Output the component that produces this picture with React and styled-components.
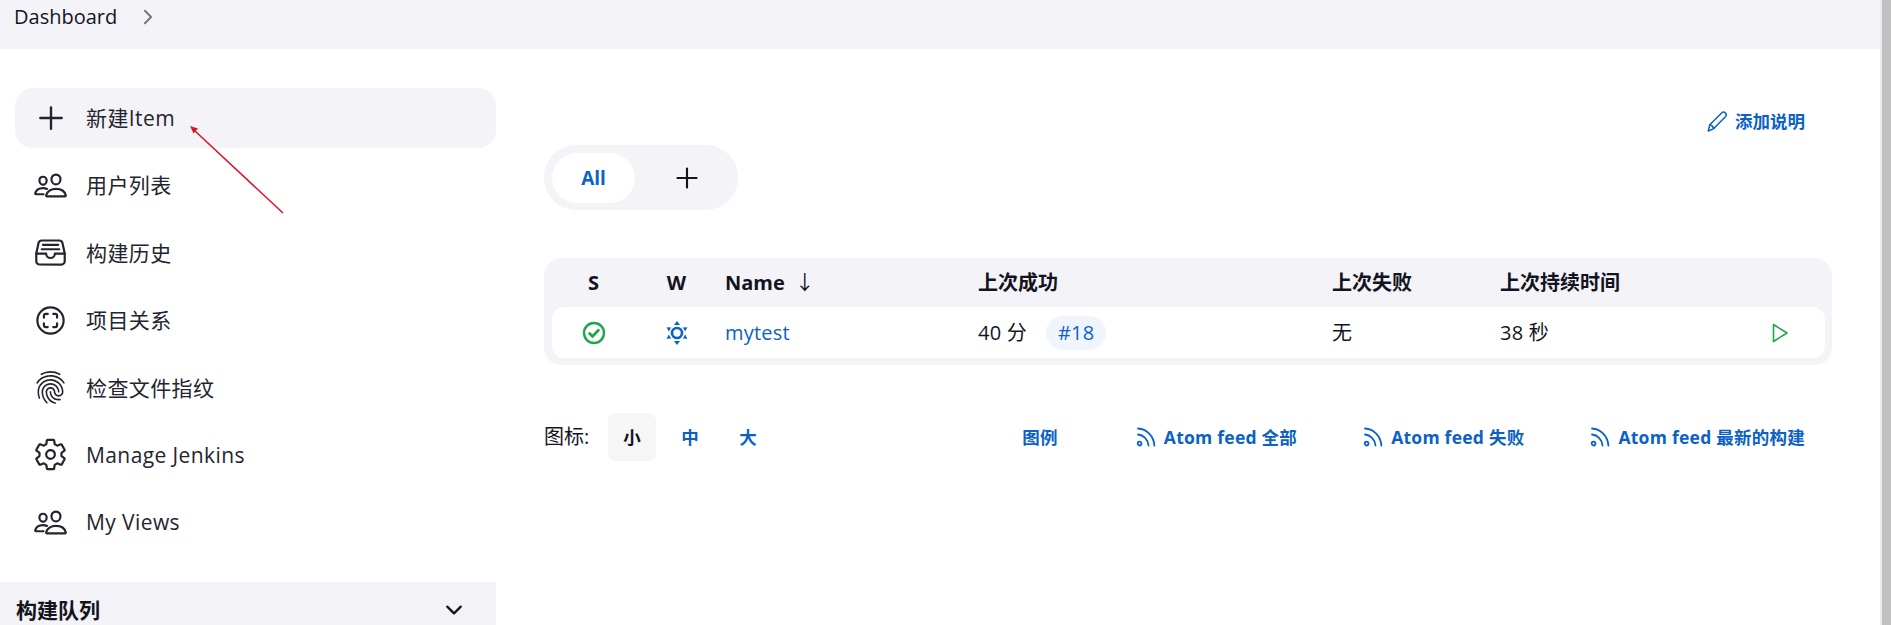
import styled, { createGlobalStyle } from 'styled-components'
import {
  IoAddOutline,
  IoPeopleOutline,
  IoFileTrayFullOutline,
  IoScanCircleOutline,
  IoFingerPrintOutline,
  IoSettingsOutline,
  IoChevronDownOutline,
  IoChevronForwardOutline,
} from 'react-icons/io5'

const GlobalStyle = createGlobalStyle`
  html, body {
    margin: 0;
    height: 100%;
    overflow: hidden;
    background: #fff;
  }
  body {
    font-family: "Open Sans", "Noto Sans CJK SC", sans-serif;
    color: #14141f;
  }
`

const Page = styled.div`
  display: flex;
  width: 1891px;
  height: 625px;
  overflow: hidden;
  position: relative;
`

const Content = styled.div`
  flex: 1;
  min-width: 0;
`

const Scrollbar = styled.div`
  width: 9px;
  background: #c1c1c1;
  border-left: 2px solid #ececec;
`

const Breadcrumb = styled.div`
  height: 49px;
  background: #f3f3f8;
  display: flex;
  align-items: flex-start;
  padding: 4px 0 0 14px;
  box-sizing: border-box;
  gap: 20px;
  font-size: 20px;
  line-height: 26px;
  svg {
    margin-top: 2px;
    color: #77777f;
  }
`

const Body = styled.div`
  display: flex;
`

const Sidebar = styled.aside`
  width: 496px;
  flex-shrink: 0;
  padding-top: 39px;
`

const NavList = styled.nav`
  display: flex;
  flex-direction: column;
  gap: 7.4px;
  margin: 0 0 30px 15px;
`

const NavItem = styled.a`
  height: 60px;
  display: flex;
  align-items: center;
  gap: 19px;
  padding-left: 19px;
  border-radius: 18px;
  font-size: 21px;
  line-height: 28px;
  letter-spacing: 0.4px;
  color: #24242e;
  background: ${(p) => (p.$active ? '#f3f3f8' : 'transparent')};
`

const NavIcon = styled.span`
  width: 33px;
  height: 33px;
  flex-shrink: 0;
  display: flex;
  align-items: center;
  justify-content: center;
  svg {
    flex-shrink: 0;
  }
`

const QueuePanel = styled.div`
  height: 60px;
  background: #f2f2f7;
  display: flex;
  align-items: flex-start;
  justify-content: space-between;
  padding: 11px 30px 0 16px;
  box-sizing: border-box;
  font-size: 21px;
  font-weight: 700;
  line-height: 34px;
  svg {
    width: 24px;
    height: 24px;
    margin-top: 5px;
  }
`

const Main = styled.main`
  flex: 1;
  min-width: 0;
  padding: 0 48px 0 48px;
`

const DescriptionRow = styled.div`
  display: flex;
  justify-content: flex-end;
  padding: 58px 27px 0 0;
  height: 96px;
  box-sizing: border-box;
`

const DescriptionLink = styled.a`
  display: flex;
  align-items: center;
  gap: 7px;
  height: 28px;
  font-size: 17.5px;
  line-height: 24px;
  font-weight: 700;
  color: #0b62c4;
`

const TabsRow = styled.div`
  height: 65px;
  margin-bottom: 48px;
`

const Tabs = styled.div`
  display: inline-flex;
  align-items: center;
  width: 194px;
  height: 65px;
  padding-left: 8px;
  box-sizing: border-box;
  border-radius: 32px;
  background: #f3f3f8;
`

const ActiveTab = styled.div`
  width: 83px;
  height: 50px;
  border-radius: 25px;
  display: flex;
  align-items: center;
  justify-content: center;
  font-size: 19px;
  font-weight: 700;
  color: #0b62c4;
  background: #fff;
`

const AddTab = styled.div`
  flex: 1;
  display: flex;
  align-items: center;
  justify-content: center;
  color: #14141f;
`

const Table = styled.div`
  background: #f3f3f8;
  border-radius: 18px;
  padding: 0 7px 7px 8px;
  height: 107px;
  box-sizing: border-box;
`

const columns = '83px 83px 7px 253px 354px 168px 230px 1fr'

const TableHead = styled.div`
  height: 49px;
  display: grid;
  grid-template-columns: ${columns};
  align-items: center;
  font-size: 20px;
  line-height: 28px;
  font-weight: 700;
`

const TableRow = styled.div`
  height: 51px;
  display: grid;
  grid-template-columns: ${columns};
  align-items: center;
  background: #fff;
  border-radius: 12px;
  font-size: 20px;
  line-height: 28px;
  letter-spacing: 0.2px;
`

const Centered = styled.div`
  display: flex;
  align-items: center;
  justify-content: center;
`

const Cell = styled.div`
  display: flex;
  align-items: center;
  gap: 19px;
  white-space: nowrap;
`

const SortArrow = styled.span`
  font-weight: 400;
  margin-left: 10px;
`

const JobLink = styled.a`
  color: #0b62c4;
`

const BuildBadge = styled.a`
  height: 34px;
  padding: 0 12px;
  display: flex;
  align-items: center;
  border-radius: 17px;
  background: #eff5fb;
  color: #0b62c4;
`

const PlayCell = styled.div`
  display: flex;
  justify-content: flex-end;
  padding-right: 34px;
`

const Footer = styled.div`
  display: flex;
  align-items: center;
  justify-content: space-between;
  height: 48px;
  margin-top: 48px;
  padding-right: 27px;
`

const SizePicker = styled.div`
  display: flex;
  align-items: center;
  font-size: 20px;
  line-height: 28px;
`

const SizeLabel = styled.span`
  width: 64px;
`

const SizeButton = styled.a`
  width: 48px;
  height: 48px;
  margin-right: ${(p) => (p.$last ? 0 : 10)}px;
  display: flex;
  align-items: center;
  justify-content: center;
  border-radius: 8px;
  font-size: 17.5px;
  font-weight: 700;
  color: ${(p) => (p.$active ? '#14141f' : '#0b62c4')};
  background: ${(p) => (p.$active ? '#f6f6f6' : 'transparent')};
`

const FooterLinks = styled.div`
  display: flex;
  align-items: center;
  gap: 66px;
`

const FooterLink = styled.a`
  display: flex;
  align-items: center;
  gap: 8px;
  font-size: 17.5px;
  line-height: 24px;
  letter-spacing: 0.25px;
  font-weight: 700;
  color: #0b62c4;
  white-space: nowrap;
  margin-right: ${(p) => (p.$legend ? 12 : 0)}px;
`

const Annotation = styled.svg`
  position: absolute;
  left: 0;
  top: 0;
  pointer-events: none;
`

const PencilIcon = () => (
  <svg width="21" height="21" viewBox="0 0 21 21" fill="none" stroke="#0b62c4" strokeWidth="1.5" strokeLinejoin="round" strokeLinecap="round">
    <path d="M1.2 20l1.6-6.2L14.6 2c1-1 2.6-1.1 3.7-.1 1.1 1.1 1.1 2.7.1 3.8L6.8 17.6z" />
    <path d="M2.8 13.8c1.7.2 3.2 1.8 4 3.8" />
  </svg>
)

const RssIcon = () => (
  <svg width="20" height="20" viewBox="0 0 20 20" fill="none" stroke="currentColor" strokeWidth="1.8" strokeLinecap="round">
    <path d="M2 1.5c8.6.4 15.8 7.6 16.4 17" />
    <path d="M2 7.5c5.4.4 10 5 10.5 11" />
    <circle cx="3.6" cy="16.6" r="1.9" />
  </svg>
)

const StatusIcon = () => (
  <svg width="24" height="24" viewBox="0 0 24 24" fill="none" stroke="#1ea64b">
    <circle cx="12" cy="12" r="10" strokeWidth="2.4" />
    <path d="M7.6 12.4l3 3 5.8-6.2" strokeWidth="2.8" strokeLinecap="round" strokeLinejoin="round" />
  </svg>
)

const WeatherIcon = () => (
  <svg width="24" height="26" viewBox="0 0 24 26" fill="#0b62c4">
    <circle cx="12" cy="13" r="5" fill="none" stroke="#0b62c4" strokeWidth="2.6" />
    <path d="M12 1l3 4h-6zM12 25l-3-4h6z" />
    <path d="M1.6 7.2l4.6.4-2.4 4zM22.4 7.2l-4.6.4 2.4 4zM1.6 18.8l4.6-.4-2.4-4zM22.4 18.8l-4.6-.4 2.4-4z" />
  </svg>
)

const PlayIcon = () => (
  <svg width="24" height="24" viewBox="0 0 24 24" fill="none" stroke="#1ea64b" strokeWidth="1.6" strokeLinejoin="round">
    <path d="M6.5 3.5L20 12 6.5 20.5z" />
  </svg>
)

const navItems = [
  { label: '新建Item', Icon: IoAddOutline, size: 38, active: true },
  { label: '用户列表', Icon: IoPeopleOutline, size: 35 },
  { label: '构建历史', Icon: IoFileTrayFullOutline, size: 35 },
  { label: '项目关系', Icon: IoScanCircleOutline, size: 35 },
  { label: '检查文件指纹', Icon: IoFingerPrintOutline, size: 35 },
  { label: 'Manage Jenkins', Icon: IoSettingsOutline, size: 35 },
  { label: 'My Views', Icon: IoPeopleOutline, size: 35 },
]

const App = () => (
  <Page>
    <GlobalStyle />
    <Content>
      <Breadcrumb>
        Dashboard
        <IoChevronForwardOutline size={22} />
      </Breadcrumb>
      <Body>
        <Sidebar>
          <NavList>
            {navItems.map(({ label, Icon, size, active }) => (
              <NavItem key={label} $active={active}>
                <NavIcon>
                  <Icon size={size} />
                </NavIcon>
                {label}
              </NavItem>
            ))}
          </NavList>
          <QueuePanel>
            构建队列
            <IoChevronDownOutline />
          </QueuePanel>
        </Sidebar>
        <Main>
          <DescriptionRow>
            <DescriptionLink>
              <PencilIcon />
              添加说明
            </DescriptionLink>
          </DescriptionRow>
          <TabsRow>
            <Tabs>
              <ActiveTab>All</ActiveTab>
              <AddTab>
                <IoAddOutline size={34} />
              </AddTab>
            </Tabs>
          </TabsRow>
          <Table>
            <TableHead>
              <Centered>S</Centered>
              <Centered>W</Centered>
              <div />
              <Cell>
                <span>
                  Name<SortArrow>↓</SortArrow>
                </span>
              </Cell>
              <Cell>上次成功</Cell>
              <Cell>上次失败</Cell>
              <Cell>上次持续时间</Cell>
              <div />
            </TableHead>
            <TableRow>
              <Centered>
                <StatusIcon />
              </Centered>
              <Centered>
                <WeatherIcon />
              </Centered>
              <div />
              <Cell>
                <JobLink>mytest</JobLink>
              </Cell>
              <Cell>
                40 分<BuildBadge>#18</BuildBadge>
              </Cell>
              <Cell>无</Cell>
              <Cell>38 秒</Cell>
              <PlayCell>
                <PlayIcon />
              </PlayCell>
            </TableRow>
          </Table>
          <Footer>
            <SizePicker>
              <SizeLabel>图标:</SizeLabel>
              <SizeButton $active>小</SizeButton>
              <SizeButton>中</SizeButton>
              <SizeButton $last>大</SizeButton>
            </SizePicker>
            <FooterLinks>
              <FooterLink $legend>图例</FooterLink>
              <FooterLink>
                <RssIcon />
                Atom feed 全部
              </FooterLink>
              <FooterLink>
                <RssIcon />
                Atom feed 失败
              </FooterLink>
              <FooterLink>
                <RssIcon />
                Atom feed 最新的构建
              </FooterLink>
            </FooterLinks>
          </Footer>
        </Main>
      </Body>
    </Content>
    <Scrollbar />
    <Annotation width="300" height="230" viewBox="0 0 300 230">
      <path d="M283 213L195 131" stroke="#d9182d" strokeWidth="1.6" fill="none" />
      <path d="M190 126l8 2.5-4.5 5z" fill="#d9182d" />
    </Annotation>
  </Page>
)

export default App
